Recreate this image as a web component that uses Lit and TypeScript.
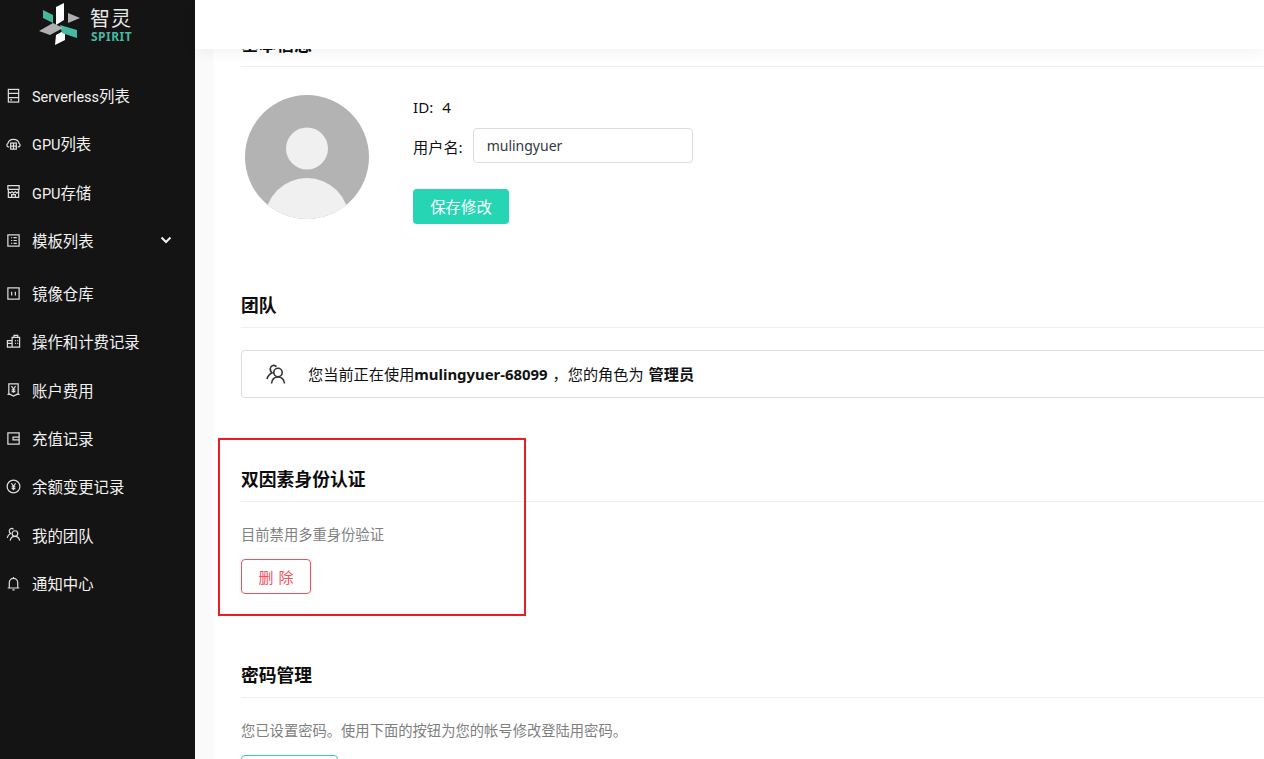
import { LitElement, html, css, svg } from "lit";
import { customElement } from "lit/decorators.js";

const stroke = (c: unknown) => html`<svg class="ico" viewBox="0 0 16 16" fill="none" stroke="currentColor" stroke-width="1.3">${c}</svg>`;

const icons = {
  server: stroke(svg`<rect x="2.500" y="1.500" width="11" height="13.500"/><path d="M2.500 5.800h11M2.500 10.200h11M4.500 12.700h2"/>`),
  cloud: stroke(svg`<path d="M3.500 11.500H2.500C.8 11.500.3 8.800 2 8 2.500 5.200 5 3.500 8 3.500s5.500 1.700 6 4.500c1.700.8 1.200 3.500-.5 3.500h-1"/><rect x="5" y="7.500" width="6" height="6.500"/><path d="M5 10.700h6M8 7.500v6.500"/>`),
  store: stroke(svg`<path d="M2 1.800h12v4H2zM2.500 5.800v8.500h11V5.800"/><path d="M2.500 8.200l2 1.500 2-1.500 1.500 1.500 2-1.500 1.500 1.500 2-1.500M6 14.300v-3h4v3"/>`),
  book: stroke(svg`<rect x="2" y="2" width="12" height="12"/><path d="M6 4.500v1M6 7.500v1M6 10.500v1M8 5h3.500M8 8h3.500M8 11h3.500"/>`),
  image: stroke(svg`<rect x="2" y="2" width="12" height="12"/><path d="M6 6v4M10 6v4"/>`),
  building: stroke(svg`<path d="M6.500 14V3.500h8V14zM1.500 14V7h5v7z"/><path d="M8.500 3.500V1.500h4v2M1.500 10h5M9.500 7h1M12 7h1M9.500 10h1M12 10h1" />`),
  bill: stroke(svg`<path d="M3 2h10v10c0 .8-.6 1.300-1.500 1.300L8 15l-3.500-1.700C3.600 13.300 3 12.800 3 12z"/><path d="M1.500 13c.7.3 1.500.3 3 .3M14.500 13c-.7.3-1.500.3-3 .3M5.800 4.500 8 7.500l2.200-3M8 7.500v4M6 8.500h4M6 10.300h4"/>`),
  wallet: stroke(svg`<rect x="2" y="2" width="12" height="12"/><path d="M14 6.500H7.500v3H14"/>`),
  yuan: stroke(svg`<circle cx="8" cy="8" r="6.800"/><path d="M5.800 4.500 8 7.800l2.200-3.300M8 7.800V12M6 8.500h4M6 10.300h4"/>`),
  team: stroke(svg`<circle cx="9.500" cy="7" r="3"/><path d="M4.500 14.500c.4-2.800 2.200-4.500 5-4.500s4.600 1.700 5 4.500M8 2.600C6.500.8 3.800 1.500 3.500 4c-.1 1.300.5 2.400 1.300 3C3 8 1.800 9.500 1.300 11.500"/>`),
  bell: stroke(svg`<path d="M3.500 12.800V7.200C3.500 4.500 5.500 2.500 8 2.500s4.500 2 4.500 4.700v5.600M1.800 12.800h12.400M6.800 14.800h2.400M8 1v1.500"/>`),
};

const nav: [unknown, string, string, string?][] = [
  [icons.server, "Serverless", "列表"],
  [icons.cloud, "GPU", "列表"],
  [icons.store, "GPU", "存储"],
  [icons.book, "", "模板列表", "more"],
  [icons.image, "", "镜像仓库"],
  [icons.building, "", "操作和计费记录"],
  [icons.bill, "", "账户费用"],
  [icons.wallet, "", "充值记录"],
  [icons.yuan, "", "余额变更记录"],
  [icons.team, "", "我的团队"],
  [icons.bell, "", "通知中心"],
];

@customElement("app-root")
export class AppRoot extends LitElement {
  static styles = css`
    :host {
      display: flex;
      width: 100%;
      height: 100vh;
      overflow: hidden;
      position: relative;
      background: #fafafa;
      font-family: "Noto Sans", "Noto Sans CJK SC", sans-serif;
      color: #111;
    }
    .side {
      flex: 0 0 195px;
      background: #141414;
      color: #f2f2f2;
      font-family: Roboto, "Noto Sans CJK SC", sans-serif;
      font-size: 15.4px;
    }
    .lat { font-size: 14.5px; }
    .logo {
      height: 71px;
      display: flex;
      align-items: flex-start;
      padding-left: 39px;
    }
    .mark { width: 42px; height: 46px; flex: none; }
    .brand {
      display: flex;
      flex-direction: column;
      margin-left: 9px;
      padding-top: 5px;
    }
    .brand b {
      font-family: "Noto Sans CJK SC", sans-serif;
      font-weight: 400;
      font-size: 20px;
      line-height: 25px;
      letter-spacing: 1px;
      color: #e8e8e8;
    }
    .brand i {
      font-family: "Noto Sans", sans-serif;
      font-style: normal;
      font-weight: 700;
      font-size: 12px;
      line-height: 12px;
      letter-spacing: 0.5px;
      color: #45b8a0;
      margin: 1px 0 0 1px;
    }
    .item {
      height: 48.33px;
      display: flex;
      align-items: center;
      padding-left: 6px;
    }
    .item.more { margin-bottom: 4.7px; }
    .ico { width: 15px; height: 15px; flex: none; margin-right: 11px; color: #dedede; }
    .chev { width: 12px; height: 12px; margin-left: auto; margin-right: 23px; }
    .main {
      flex: 1;
      min-width: 0;
      margin-left: 18px;
      background: #fff;
      padding: 31px 0 0 28px;
      font-size: 15.2px;
    }
    .top {
      position: absolute;
      left: 195px;
      right: 0;
      top: 0;
      height: 49px;
      background: #fff;
      box-shadow: 0 2px 16px rgba(0, 0, 0, 0.06);
    }
    h2 {
      margin: 0;
      font-size: 17.8px;
      line-height: 24px;
      font-weight: 700;
      color: #0c0c0c;
      padding-bottom: 11px;
      border-bottom: 1px solid #efefef;
      font-family: "Noto Sans CJK SC", sans-serif;
    }
    section { margin-bottom: 68px; }
    .profile {
      display: flex;
      gap: 44px;
      margin: 28px 0 0 4px;
    }
    .avatar { width: 124px; height: 124px; flex: none; }
    .fields { padding-top: 1px; }
    .id { line-height: 22px; word-spacing: 5px; }
    .row { display: flex; align-items: center; margin-top: 10px; gap: 10px; }
    .input {
      width: 220px;
      height: 35px;
      box-sizing: border-box;
      border: 1px solid #dcdcdc;
      border-radius: 4px;
      padding: 0 13px;
      font-size: 14px;
      line-height: 33px;
      color: #33383e;
    }
    .btn {
      display: flex;
      align-items: center;
      justify-content: center;
      box-sizing: border-box;
      height: 35px;
      border-radius: 4px;
      font-size: 15px;
    }
    .save {
      width: 96px;
      margin-top: 26px;
      background: #25d5b4;
      color: #fff;
      font-size: 15.4px;
    }
    .box {
      margin: 22px -20px 0 0;
      height: 48px;
      box-sizing: border-box;
      border: 1px solid #dcdcdc;
      border-radius: 4px;
      display: flex;
      align-items: center;
      padding: 0 0 2px 23px;
      word-spacing: 1px;
    }
    .box svg { width: 22px; height: 22px; margin: 2px 21px 0 0; color: #333; flex: none; }
    .box b { font-weight: 700; font-size: 14.9px; }
    .box .role { font-weight: 600; font-family: "Noto Sans CJK SC", sans-serif; }
    .desc {
      margin: 22px 0 13px;
      font-size: 14.3px;
      line-height: 22px;
      color: #7f7f7f;
    }
    .del {
      width: 70px;
      border: 1px solid #f5515b;
      color: #f5515b;
      word-spacing: 1px;
    }
    .chg {
      width: 97px;
      border: 1px solid #3fc9ad;
      color: #3fc9ad;
    }
    .mark-box {
      position: absolute;
      left: 218px;
      top: 438px;
      width: 308px;
      height: 178px;
      box-sizing: border-box;
      border: 2px solid #ed1c24;
      pointer-events: none;
    }
  `;

  render() {
    return html`
      <aside class="side">
        <div class="logo">
          <svg class="mark" viewBox="39 0 42 46">
            <path fill="#fff" d="M56 7 64 3V20L56 25Z" />
            <path fill="#fff" d="M55 45 65 40V30L56 35Z" />
            <path fill="#45b8a0" d="M43 10 53 15V23L43 18Z" />
            <path fill="#45b8a0" d="M60 25 77 30V38L62 33Z" />
            <path fill="#b0b0b0" d="M68 13 80 18 68 23Z" />
            <path fill="#b0b0b0" d="M39 31 53 23 63 28 50 35Z" />
          </svg>
          <div class="brand"><b>智灵</b><i>SPIRIT</i></div>
        </div>
        ${nav.map(
          ([ic, latin, label, more]) => html`
            <div class="item ${more ? "more" : ""}">
              ${ic}<span><span class="lat">${latin}</span>${label}</span>
              ${more
                ? html`<svg class="chev" viewBox="0 0 12 12" fill="none" stroke="currentColor" stroke-width="2"><path d="M1.500 3.500 6 8l4.500-4.500" /></svg>`
                : ""}
            </div>
          `
        )}
      </aside>
      <main class="main">
        <section>
          <h2>基本信息</h2>
          <div class="profile">
            <svg class="avatar" viewBox="0 0 124 124">
              <defs><clipPath id="c"><circle cx="62" cy="62" r="62" /></clipPath></defs>
              <circle cx="62" cy="62" r="62" fill="#b3b3b3" />
              <circle cx="62" cy="53.500" r="21" fill="#f0f0f0" />
              <circle cx="62" cy="125" r="42" fill="#f0f0f0" clip-path="url(#c)" />
            </svg>
            <div class="fields">
              <div class="id">ID: 4</div>
              <div class="row"><span>用户名:</span><div class="input">mulingyuer</div></div>
              <div class="btn save">保存修改</div>
            </div>
          </div>
        </section>
        <section>
          <h2>团队</h2>
          <div class="box">
            <svg viewBox="0 0 22 22" fill="none" stroke="currentColor" stroke-width="1.600">
              <circle cx="13" cy="9.500" r="4.200" />
              <path d="M6.500 20.500C7 16.500 9.500 14 13 14s6 2.500 6.500 6.500M11.500 3.600C9.500 1.500 5.800 2 5.300 5.500c-.2 2 .8 3.500 2 4.300C4.500 11 2.800 13 2 16" />
            </svg>
            <span>您当前正在使用<b>mulingyuer-68099</b> ，您的角色为 <span class="role">管理员</span></span>
          </div>
        </section>
        <section>
          <h2>双因素身份认证</h2>
          <p class="desc">目前禁用多重身份验证</p>
          <div class="btn del">删 除</div>
        </section>
        <section>
          <h2>密码管理</h2>
          <p class="desc">您已设置密码。使用下面的按钮为您的帐号修改登陆用密码。</p>
          <div class="btn chg">修改密码</div>
        </section>
      </main>
      <div class="top"></div>
      <div class="mark-box"></div>
    `;
  }
}
